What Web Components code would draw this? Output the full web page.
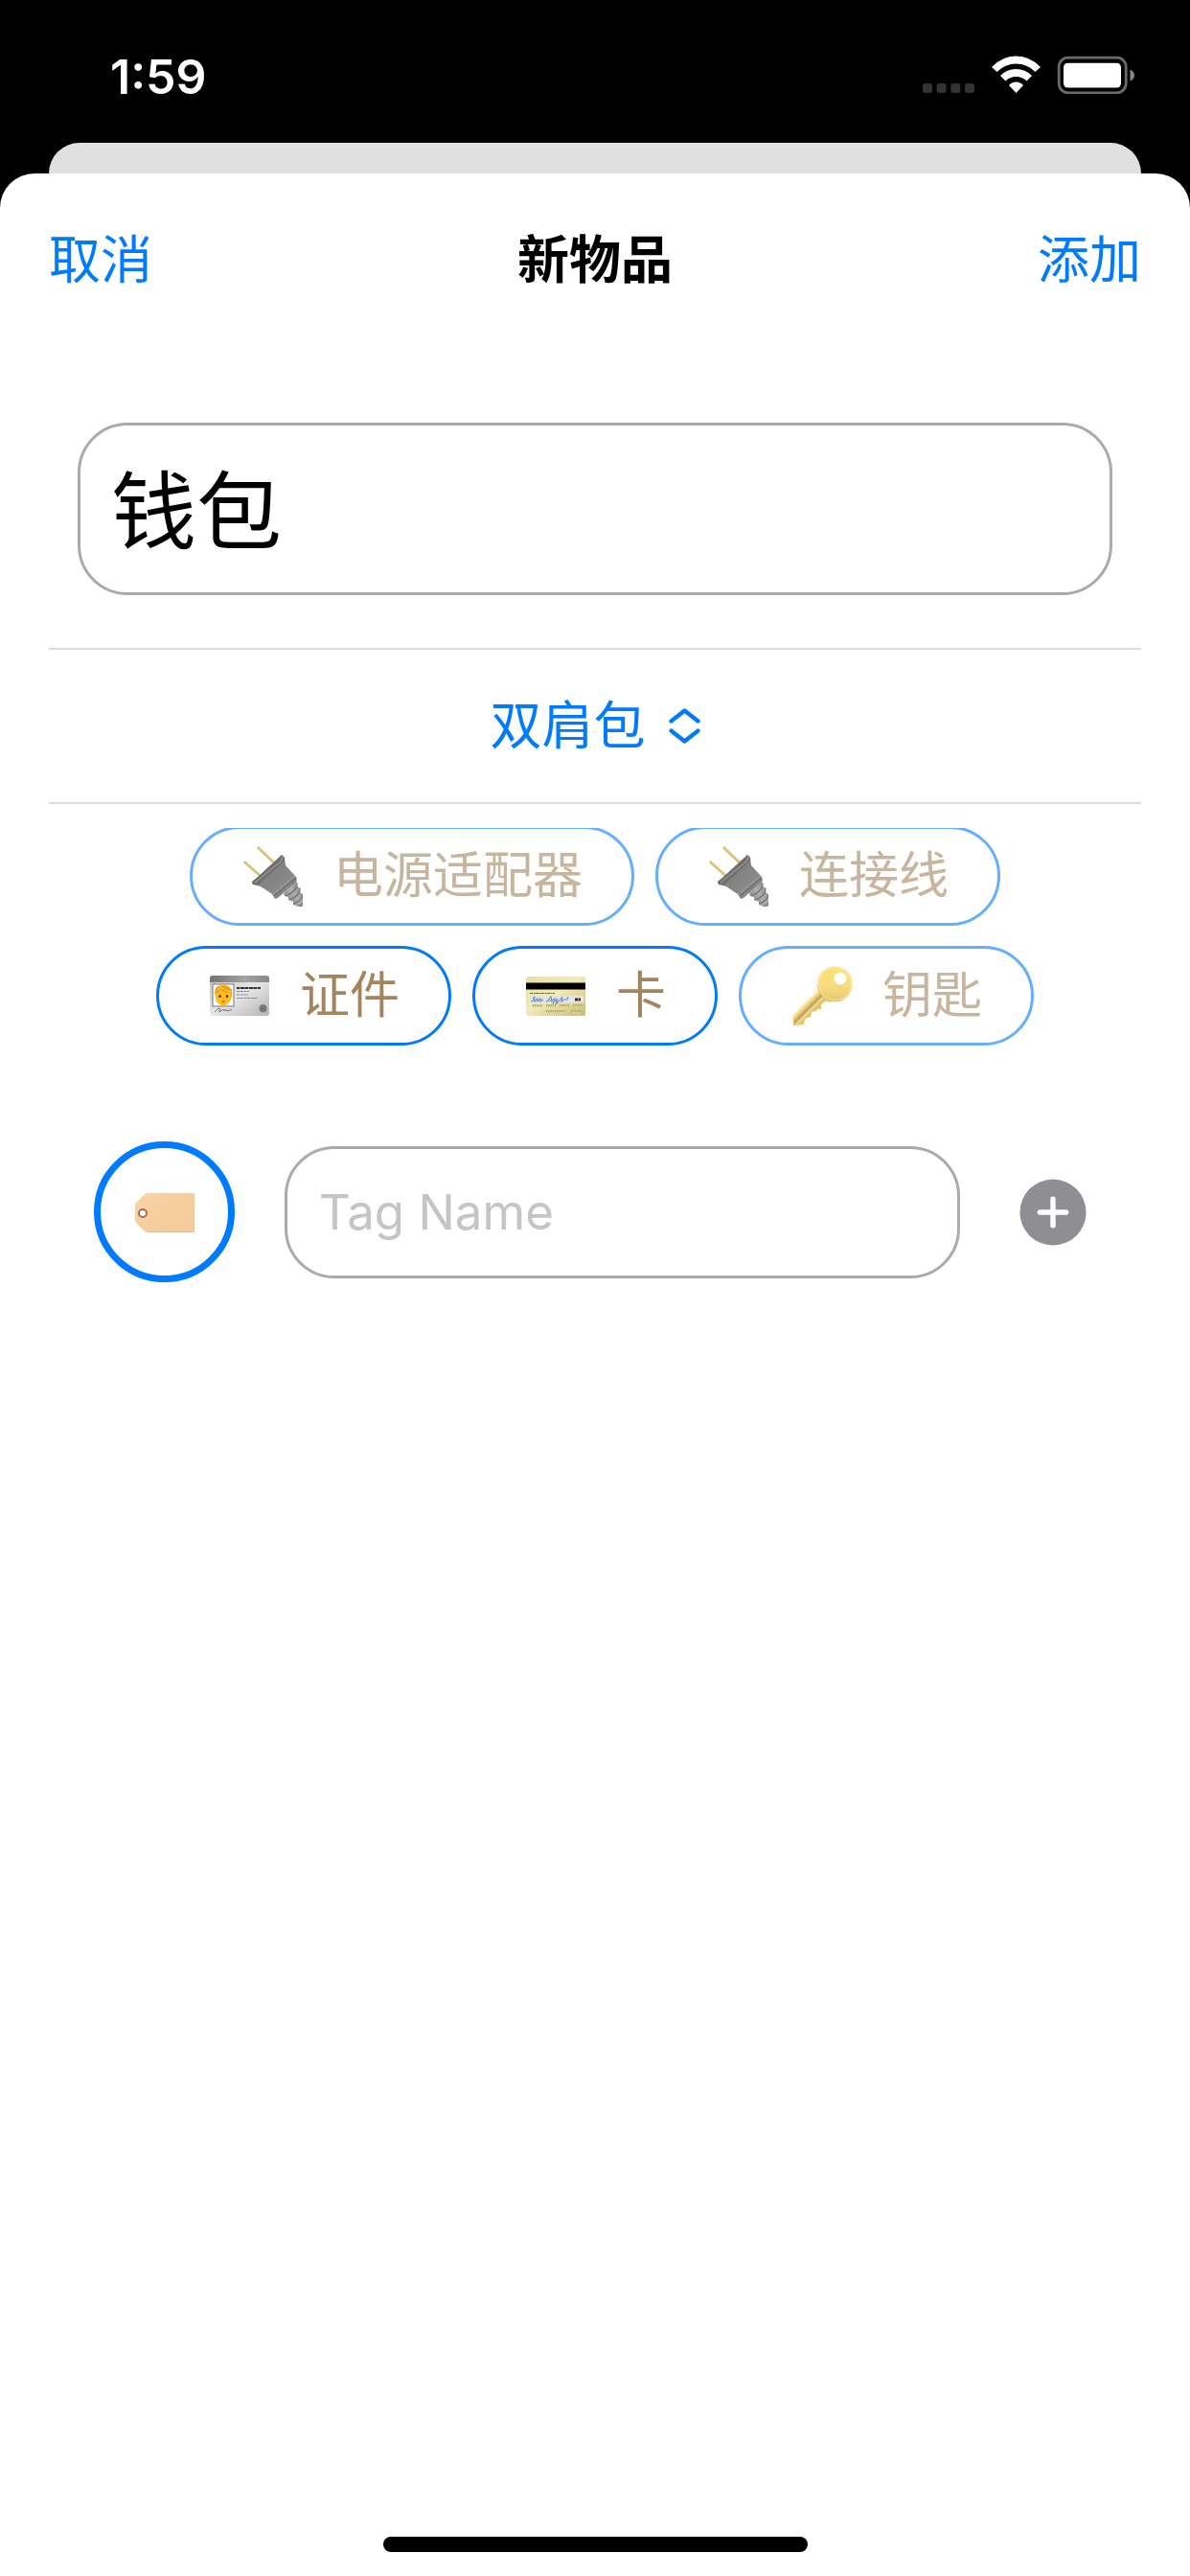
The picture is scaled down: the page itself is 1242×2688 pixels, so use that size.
<!DOCTYPE html>
<html lang="zh-CN">
<head>
<meta charset="utf-8">
<meta name="viewport" content="width=device-width, initial-scale=1">
<title>新物品</title>
<style>
  body {
    margin: 0;
    background: #000;
    font-family: Inter, "Noto Sans CJK SC", sans-serif;
    --blue: #007aff;
    --brown: #a2845e;
    --outline: #aaaaaa;
    --body-size: 54px;
    --side: 51px;
  }
</style>
</head>
<body>
<item-app></item-app>

<script>
const define = (name, html, setup) => {
  const template = document.createElement('template');
  template.innerHTML = html;
  customElements.define(name, class extends HTMLElement {
    constructor() {
      super();
      this.attachShadow({ mode: 'open' }).append(template.content.cloneNode(true));
    }
    connectedCallback() {
      if (setup) setup(this, this.shadowRoot);
    }
  });
};

/* Emoji-like pictures, all drawn on a 64 x 64 field */
const pictures = {
  plug: `
    <defs>
      <linearGradient id="b" x1="0" y1="0" x2="1" y2="1"><stop offset="0" stop-color="#0c0c0c"/><stop offset=".35" stop-color="#2c2c2c"/><stop offset=".7" stop-color="#3d3d3d"/><stop offset="1" stop-color="#1c1c1c"/></linearGradient>
      <linearGradient id="w" x1="1" y1="0" x2="0" y2="1"><stop offset="0" stop-color="#222"/><stop offset=".5" stop-color="#7a7a7a"/><stop offset="1" stop-color="#1c1c1c"/></linearGradient>
    </defs>
    <path d="M17 2 35 19M3 17 21 33" stroke="#b88d1c" stroke-width="3"/>
    <path d="M17.500 1.500 35 18M3.500 16.500 21 32" stroke="#e8c662" stroke-width="1"/>
    <path d="M44 50 56 37 59 40 58 43 62 45 61 49 64 51 64 55 65 57 65 64 59 64 54 62 54 59 49 57 49 54 45 53Z" fill="url(#w)"/>
    <path d="M46 53Q56 49 58 42M50 57Q59 54 61 47M54 61Q62 59 64 52M60 64Q64 62 65 58" fill="none" stroke="#151515" stroke-width="1.200"/>
    <path d="M42 10 45 13 46 21 57 33 58 37 38 55 35 56 32 51 20 43 12 41 11 38 15 35 40 13Z" fill="url(#b)"/>
    <path d="M42 10 45 13 44 17 18 41 12 41 11 38 16 34Z" fill="#101010"/>
    <path d="M43 12 41 17 14 39" fill="none" stroke="#777" stroke-width="1"/>
    <path d="M57 34 34 53" stroke="#111" stroke-width="1.500"/>
    <path d="M56 32 33 51" stroke="#666" stroke-width="1"/>`,
  key: `
    <defs>
      <linearGradient id="k" x1="0" y1="0" x2="0" y2="1"><stop offset="0" stop-color="#fbd018"/><stop offset=".5" stop-color="#f6c72c"/><stop offset="1" stop-color="#d9a313"/></linearGradient>
    </defs>
    <path d="M30 26 38 37 32 41 32 46 28 46 27 48 22 49 21 54 15 56 14 62 3 63 3 54Z" fill="#d29c12"/>
    <path d="M30 27 3 54" stroke="#f8d24d" stroke-width="3"/>
    <path d="M32 32 4 60" stroke="#8e6707" stroke-width="2"/>
    <path d="M34 34 6 62" stroke="#f2c848" stroke-width="1.500"/>
    <path d="M27 22 37 38 42 39 45 35 30 18Z" fill="#e0aa12"/>
    <path fill-rule="evenodd" d="M46.500 1.500A18.300 18.300 0 1 1 46.500 38.100A18.300 18.300 0 1 1 46.500 1.500ZM52 7.500A6.500 6.500 0 1 0 52 20.500A6.500 6.500 0 1 0 52 7.500Z" fill="url(#k)"/>
    <circle cx="46.500" cy="19.800" r="17" fill="none" stroke="#fbe070" stroke-width="1"/>
    <path d="M29 24A18 18 0 0 0 54 36" fill="none" stroke="#c18f12" stroke-width="1"/>`,
  idcard: `
    <defs>
      <linearGradient id="c" x1="0" y1="0" x2="1" y2="1"><stop offset="0" stop-color="#c4c4c4"/><stop offset=".5" stop-color="#e6e6e6"/><stop offset="1" stop-color="#b4b4b4"/></linearGradient>
      <linearGradient id="h"><stop offset="0" stop-color="#737373"/><stop offset=".6" stop-color="#a4a4a4"/><stop offset="1" stop-color="#888"/></linearGradient>
    </defs>
    <rect x="2" y="11" width="62" height="42" rx="3" fill="url(#c)"/>
    <path d="M2 18V14Q2 11 5 11H61Q64 11 64 14V18Z" fill="url(#h)"/>
    <rect x="5" y="20" width="22" height="23" fill="#fff" stroke="#777" stroke-width="1"/>
    <path d="M7.500 30Q7 22 13 21.500Q23 20 25 27V33Q24 36 23 38Q19 42.500 16 42.500T9 38Q7.500 35 7.500 30Z" fill="#fdbd22"/>
    <path d="M7.500 31Q6 22 13 21.500Q23 20 25 27V34L23 29Q17 29.500 13 25.500Q12 29 9 29.500Z" fill="#f2a20c"/>
    <path d="M10 26Q11 23 14 23.500Q20 28 24 28" fill="none" stroke="#ffd760" stroke-width="1"/>
    <ellipse cx="12.500" cy="32.500" rx="1.200" ry="1.500" fill="#4b3010"/><ellipse cx="20" cy="32.500" rx="1.200" ry="1.500" fill="#4b3010"/>
    <ellipse cx="16" cy="38.300" rx="1.800" ry="1" fill="#c86a14"/>
    <path d="M30 24H55" stroke="#333" stroke-width="2" stroke-dasharray="3 .6 5 .4"/>
    <path d="M30 27.500H43M30 31H42M30 34.500H52" stroke="#888" stroke-width="1" stroke-dasharray="3 .7"/>
    <path d="M7 49Q12 43 13 46Q9 51 15 47Q18 45 17 48Q20 45 20 48L25 46.500" fill="none" stroke="#555" stroke-width=".8"/>
    <circle cx="57.500" cy="45.300" r="4" fill="#707070"/><circle cx="57.500" cy="45.300" r="2.500" fill="none" stroke="#888" stroke-width=".7"/>`,
  credit: `
    <defs>
      <linearGradient id="g" x1="0" y1="0" x2="1" y2="1"><stop offset="0" stop-color="#e9dfa0"/><stop offset=".45" stop-color="#f2ebb8"/><stop offset="1" stop-color="#c9bd74"/></linearGradient>
    </defs>
    <rect x="2" y="12" width="63" height="41" rx="3" fill="url(#g)"/>
    <path d="M2 18.500H65V25.500H2Z" fill="#000"/>
    <path d="M6 29.500H32" stroke="#6d683e" stroke-width="1.200" stroke-dasharray="3 .6 2 .4"/>
    <path d="M6 32H62V39.500H6Z" fill="#e4e5e2"/>
    <path d="M7 38Q12 38 11 33Q8 34 11 38L14 35 14 38 17 35 17 38 20 36 M23 39 28 33 29 39M25 37H29L32 35 30 41M32 38 35 35 33 41 37 37 40 33 39 38 42 36 45 36 46 33" fill="none" stroke="#6a93cc" stroke-width="1.100"/>
    <path d="M53 36H59" stroke="#333" stroke-width="3" stroke-dasharray="3 .5"/>
    <path d="M9 42.500H19M23 42.500H33M37 42.500H47M51 42.500H61M23 48.500H43M49 48.500H61" stroke="#b9ae6c" stroke-width="3" stroke-dasharray="1.500 .7"/>
    <path d="M10 43.500H19M24 43.500H33M38 43.500H47M52 43.500H61M24 49.500H43M50 49.500H61" stroke="#f2edca" stroke-width="1" stroke-dasharray="1 1.200"/>`,
  tag: `
    <defs>
      <linearGradient id="t" x1="0" y1="0" x2="1" y2="1"><stop offset="0" stop-color="#fad3a4"/><stop offset="1" stop-color="#f3ca99"/></linearGradient>
    </defs>
    <path d="M14 12H63V53H14Q12 53 10 51L3 44Q1 42 1 40V25Q1 23 3 21L10 14Q12 12 14 12Z" fill="url(#t)"/>
    <path d="M14 52.500H63" stroke="#eabd86" stroke-width="1"/>
    <circle cx="9" cy="33" r="4" fill="#fff" stroke="#a26e58" stroke-width="2"/>
    <path d="M31 25v2M47 20v2M52 29v2M44 45v2M37 31v1" stroke="#e8bd8a" stroke-width=".8"/>`
};

define('emoji-picture', `
  <style>
    :host { display: block; width: 64px; height: 64px; }
    svg { display: block; width: 100%; height: 100%; }
  </style>
  <svg viewBox="0 0 64 64" fill="none" aria-hidden="true"></svg>`,
  (host, root) => { root.querySelector('svg').innerHTML = pictures[host.getAttribute('name')]; });

define('status-bar', `
  <style>
    :host { display: flex; justify-content: space-between; align-items: flex-start; height: 149px; padding: 0 57px 0 115px; box-sizing: border-box; color: #fff; }
    time { font-size: 50px; font-weight: 600; line-height: 58px; padding-top: 51px; }
    svg { display: block; width: 222px; height: 40px; margin-top: 58px; }
  </style>
  <time>1:59</time>
  <svg viewBox="963 58 222 40" aria-hidden="true">
    <g fill="#333"><rect x="963" y="87" width="10" height="10" rx="3"/><rect x="977.600" y="87" width="10" height="10" rx="3"/><rect x="992.300" y="87" width="10" height="10" rx="3"/><rect x="1007" y="87" width="10" height="10" rx="3"/></g>
    <g fill="#fff">
      <path d="M1035 70Q1046 58.500 1060.500 58.500T1086 70L1080.500 75Q1072 66.500 1060.500 66.500T1040.500 75Z"/>
      <path d="M1044 79Q1051 72 1060.500 72T1077 79L1071.500 84.500Q1067 80 1060.500 80T1049.500 84.500Z"/>
      <path d="M1053 89Q1056 85.500 1060.500 85.500T1068 89L1060.500 97Z"/>
    </g>
    <rect x="1105.200" y="60.200" width="70" height="36.600" rx="9.500" fill="none" stroke="#6a6a6a" stroke-width="2.800"/>
    <rect x="1110" y="65.700" width="60" height="25.800" rx="4.500" fill="#fff"/>
    <path d="M1179.500 72.500Q1184 74.500 1184 78.500T1179.500 84.500Z" fill="#858585"/>
  </svg>`);

define('nav-bar', `
  <style>
    :host { display: grid; grid-template-columns: 1fr auto 1fr; align-items: center; height: 182px; padding: 0 var(--side); font-size: var(--body-size); line-height: 64px; }
    button { all: unset; color: var(--blue); cursor: pointer; justify-self: start; }
    button:last-child { justify-self: end; }
    h1 { margin: 0; font-size: inherit; font-weight: 600; }
  </style>
  <button type="button"><slot name="cancel"></slot></button>
  <h1><slot></slot></h1>
  <button type="button"><slot name="confirm"></slot></button>`);

define('text-box', `
  <style>
    :host { display: block; }
    input {
      display: block; width: 100%; height: 100%; box-sizing: border-box; margin: 0; padding: var(--box-padding, 0 33px);
      border: 3px solid var(--outline); border-radius: 52px; background: #fff; color: #000;
      font: inherit; outline: 0;
    }
    input::placeholder { color: #c5c5c7; opacity: 1; }
  </style>
  <input type="text">`,
  (host, root) => {
    const input = root.querySelector('input');
    input.value = host.getAttribute('value') || '';
    input.placeholder = host.getAttribute('placeholder') || '';
    input.setAttribute('aria-label', host.getAttribute('label'));
  });

define('bag-picker', `
  <style>
    :host { display: block; padding: 0 var(--side); }
    label { display: flex; justify-content: center; align-items: center; gap: 24px; height: 159px; border: solid #dcdcdc; border-width: 2px 0; }
    select { appearance: none; border: 0; margin: 0; padding: 0; background: none; color: var(--blue); font: inherit; font-size: var(--body-size); line-height: 64px; outline: 0; }
    svg { display: block; width: 33px; height: 38px; }
  </style>
  <label>
    <select aria-label="包"><option>双肩包</option></select>
    <svg viewBox="0 0 33 38" fill="none" stroke="#007aff" stroke-width="4.300" stroke-linecap="round" stroke-linejoin="round" aria-hidden="true"><path d="M2.500 13.500 16.500 2.500 30.500 13.500M2.500 23.500 16.500 34.500 30.500 23.500"/></svg>
  </label>`);

define('tag-chip', `
  <style>
    :host { display: block; }
    button {
      all: unset; box-sizing: border-box; display: flex; align-items: center; gap: 32px; height: 104px; padding: 0 51px;
      border: 3px solid var(--blue); border-radius: 52px; color: var(--brown); font-size: 52px; line-height: 64px;
      white-space: nowrap; cursor: pointer; opacity: .6;
    }
    :host([selected]) button { opacity: 1; }
  </style>
  <button type="button"><emoji-picture></emoji-picture><span><slot></slot></span></button>`,
  (host, root) => {
    const picture = document.createElement('emoji-picture');
    picture.setAttribute('name', host.getAttribute('icon'));
    root.querySelector('emoji-picture').replaceWith(picture);
    root.querySelector('button').setAttribute('aria-pressed', host.hasAttribute('selected'));
  });

define('tag-list', `
  <style>
    :host { display: block; overflow: hidden; margin-top: 25px; }
    div { display: flex; flex-direction: column; gap: 21px; margin-top: -2px; }
    ::slotted(div) { display: flex; flex-wrap: wrap; justify-content: center; gap: 22px; }
  </style>
  <div><slot></slot></div>`);

define('new-tag', `
  <style>
    :host { display: flex; align-items: center; gap: 52px; padding: 100px 98px 0; }
    button { all: unset; display: flex; align-items: center; justify-content: center; flex: none; cursor: pointer; box-sizing: border-box; }
    .picture { width: 147px; height: 147px; border: 7px solid var(--blue); border-radius: 50%; }
    text-box { flex: 1; min-width: 0; height: 138px; font-size: 51px; }
    .add { width: 90px; height: 90px; }
    svg { display: block; width: 70px; height: 70px; }
  </style>
  <button type="button" class="picture" aria-label="图标"><emoji-picture name="tag"></emoji-picture></button>
  <text-box label="Tag Name" placeholder="Tag Name"></text-box>
  <button type="button" class="add" aria-label="添加标签">
    <svg viewBox="0 0 70 70" aria-hidden="true"><circle cx="35" cy="35" r="34.500" fill="#8e8e93"/><path d="M35 21.300V48.700M21.300 35H48.700" stroke="#fff" stroke-width="5.400" stroke-linecap="round"/></svg>
  </button>`);

define('modal-sheet', `
  <style>
    :host { display: flex; flex-direction: column; flex: 1; }
    .behind { height: 32px; margin: 0 var(--side); border-radius: 32px 32px 0 0; background: #e0e0e0; }
    main { display: flex; flex-direction: column; flex: 1; border-radius: 36px 36px 0 0; background: #fff; }
    footer { display: flex; justify-content: center; margin-top: auto; padding: 48px 0 25px; }
    .home { width: 443px; height: 16px; border-radius: 8px; background: #000; }
  </style>
  <div class="behind"></div>
  <main>
    <slot></slot>
    <footer><div class="home"></div></footer>
  </main>`);

define('item-app', `
  <style>
    :host { display: flex; flex-direction: column; min-height: 100vh; }
    .name { --box-padding: 0 32px 8px; height: 180px; margin: 78px 81px 55px; font-size: 89px; }
  </style>
  <status-bar></status-bar>
  <modal-sheet>
    <nav-bar><span slot="cancel">取消</span>新物品<span slot="confirm">添加</span></nav-bar>
    <text-box class="name" label="名称" value="钱包"></text-box>
    <bag-picker></bag-picker>
    <tag-list>
      <div><tag-chip icon="plug">电源适配器</tag-chip><tag-chip icon="plug">连接线</tag-chip></div>
      <div><tag-chip icon="idcard" selected>证件</tag-chip><tag-chip icon="credit" selected>卡</tag-chip><tag-chip icon="key">钥匙</tag-chip></div>
    </tag-list>
    <new-tag></new-tag>
  </modal-sheet>`);
</script>
</body>
</html>
